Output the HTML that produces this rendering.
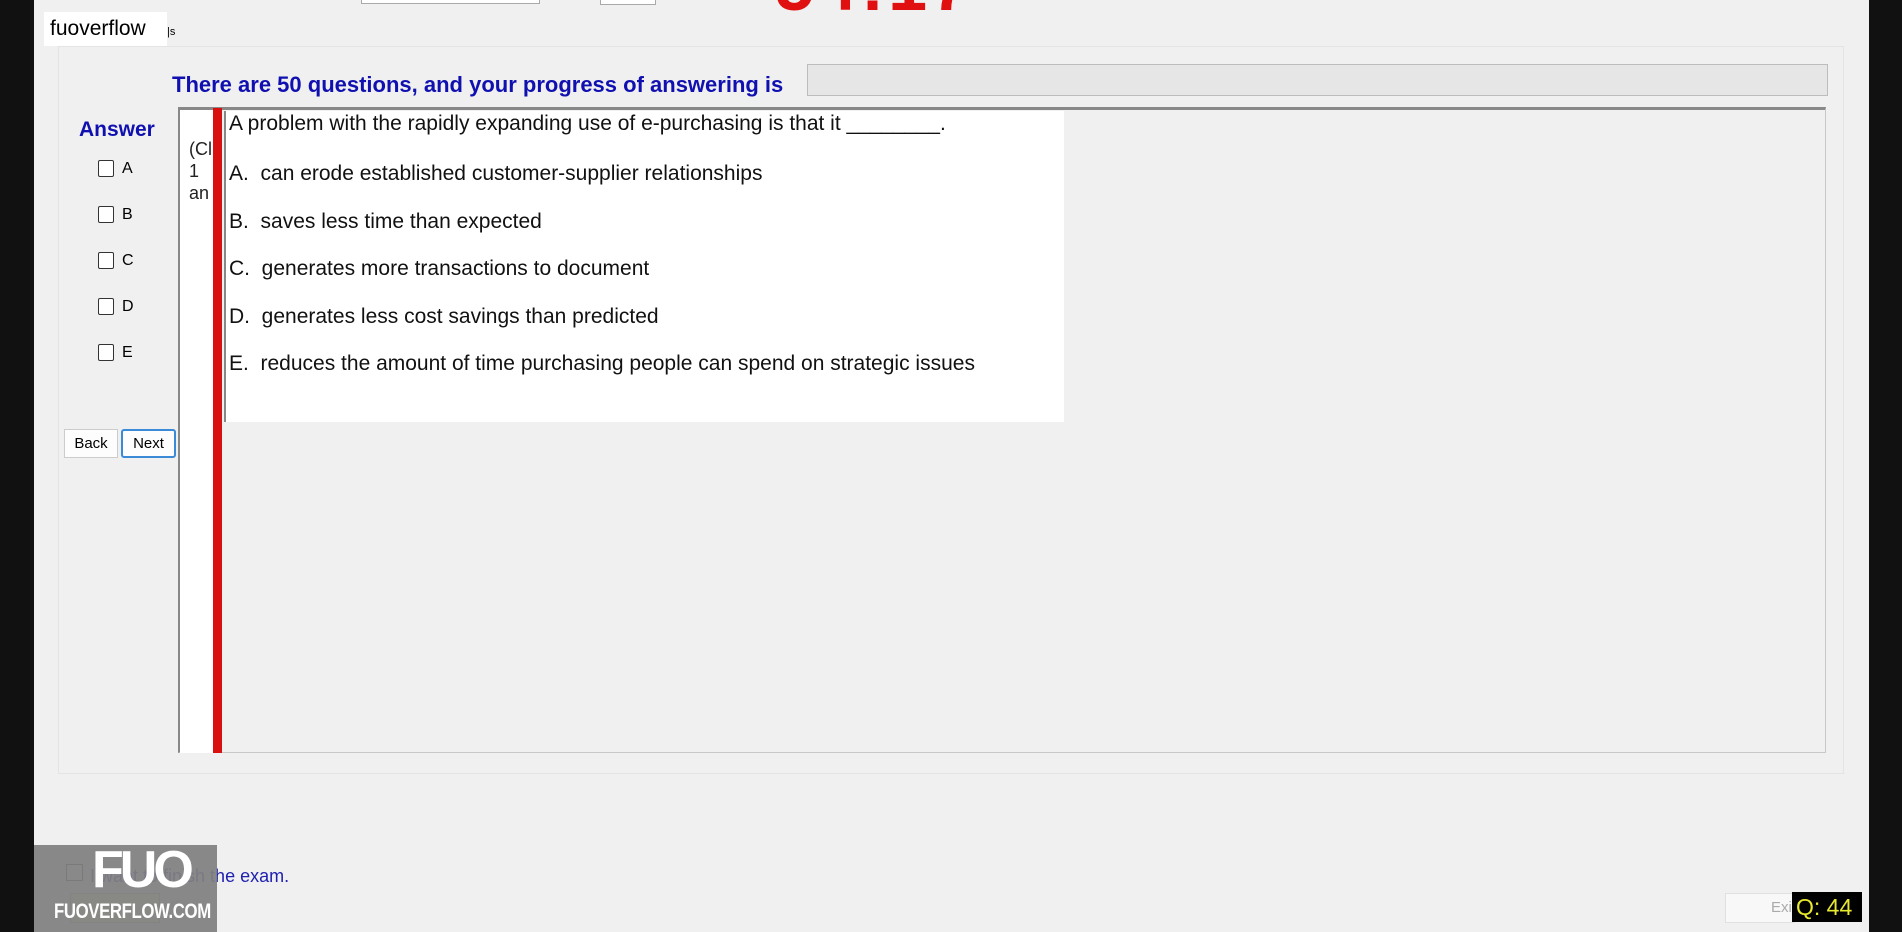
<!DOCTYPE html>
<html><head><meta charset="utf-8"><style>
*{margin:0;padding:0;box-sizing:border-box}
body{width:1902px;height:932px;overflow:hidden;background:#f0f0f0;font-family:"Liberation Sans",Arial,sans-serif;position:relative}
.a{position:absolute}
.cb{display:inline-block;width:16px;height:17px;border:1px solid #333;border-radius:2px;vertical-align:middle;background:#fff;margin-right:8px}
</style></head><body>
<div class="a" style="left:0;top:0;width:34px;height:932px;background:#111"></div>
<div class="a" style="left:1869px;top:0;width:33px;height:932px;background:#111"></div>
<div class="a" style="left:361px;top:0;width:179px;height:4px;background:#fff;border:1px solid #aaa;border-top:none"></div>
<div class="a" style="left:600px;top:0;width:56px;height:5px;background:#fff;border:1px solid #aaa;border-top:none"></div>
<div class="a" style="left:775px;top:-49px;font-size:70px;font-weight:bold;color:#e01010;line-height:1;letter-spacing:4px">54:17</div>
<div class="a" style="left:58px;top:46px;width:1786px;height:728px;border:1px solid #e4e4e4"></div>
<div class="a" style="left:44px;top:12px;width:123px;height:34px;background:#fff"></div>
<div class="a" style="left:50px;top:17px;font-size:21px;color:#000">fuoverflow</div>
<div class="a" style="left:167px;top:26px;font-size:11px;color:#000">|s</div>
<div class="a" style="left:172px;top:72px;font-size:22px;font-weight:bold;color:#1010b0">There are 50 questions, and your progress of answering is</div>
<div class="a" style="left:807px;top:64px;width:1021px;height:32px;background:#e6e6e6;border:1px solid #bcbcbc"></div>
<div class="a" style="left:79px;top:118px;font-size:21px;font-weight:bold;color:#1010b0">Answer</div>
<div class="a" style="left:98px;top:146px;font-size:16px;line-height:46px;color:#000">
<div><span class="cb"></span>A</div>
<div><span class="cb"></span>B</div>
<div><span class="cb"></span>C</div>
<div><span class="cb"></span>D</div>
<div><span class="cb"></span>E</div>
</div>
<div class="a" style="left:64px;top:429px;width:54px;height:29px;background:#fdfdfd;border:1px solid #ccc;font-size:15px;text-align:center;line-height:27px">Back</div>
<div class="a" style="left:121px;top:429px;width:55px;height:29px;background:#fdfdfd;border:2px solid #3a8ad8;border-radius:3px;font-size:15px;text-align:center;line-height:25px">Next</div>
<div class="a" style="left:178px;top:107px;width:1648px;height:646px;background:#f0f0f0;border:1px solid #c8c8c8;border-top:3px solid #888;border-left:2px solid #888"></div>
<div class="a" style="left:180px;top:110px;width:34px;height:643px;background:#fff"></div>
<div class="a" style="left:189px;top:138px;font-size:18px;line-height:22px;color:#222;width:24px;overflow:hidden;white-space:nowrap">(Cl<br>1<br>an</div>
<div class="a" style="left:213px;top:108px;width:9px;height:645px;background:#d81010"></div>
<div class="a" style="left:224px;top:111px;width:840px;height:311px;background:#fff;border-left:2px solid #888"></div>
<div class="a" style="left:229px;top:112px;font-size:21px;color:#111;line-height:47.6px;white-space:nowrap">
<div style="line-height:24px;margin-bottom:14px">A problem with the rapidly expanding use of e-purchasing is that it ________.</div>
<div>A.&nbsp; can erode established customer-supplier relationships</div>
<div>B.&nbsp; saves less time than expected</div>
<div>C.&nbsp; generates more transactions to document</div>
<div>D.&nbsp; generates less cost savings than predicted</div>
<div>E.&nbsp; reduces the amount of time purchasing people can spend on strategic issues</div>
</div>
<div class="a" style="left:66px;top:864px;width:17px;height:17px;border:1px solid #333;background:#fff"></div>
<div class="a" style="left:90px;top:866px;font-size:18px;color:#2020b0">I want to finish the exam.</div>
<div class="a" style="left:70px;top:893px;width:90px;height:30px;background:#e8e8b0;border:1px solid #aaa"></div>
<div class="a" style="left:34px;top:845px;width:183px;height:87px;background:rgba(128,128,128,.93)"></div>
<div class="a" style="left:92px;top:840px;font-size:52px;font-weight:bold;color:#fff;letter-spacing:-4px">FUO</div>
<div class="a" style="left:54px;top:900px;font-size:21px;font-weight:bold;color:#fff;letter-spacing:-.5px;transform:scaleX(.8);transform-origin:left">FUOVERFLOW.COM</div>
<div class="a" style="left:1725px;top:893px;width:70px;height:30px;background:#f8f8f8;border:1px solid #e0e0e0;font-size:15px;color:#aaa;line-height:28px;padding-left:45px;overflow:hidden">Exit</div>
<div class="a" style="left:1792px;top:892px;width:70px;height:30px;background:#000;color:#e8e830;font-size:23px;line-height:30px;padding-left:4px">Q: 44</div>
</body></html>
